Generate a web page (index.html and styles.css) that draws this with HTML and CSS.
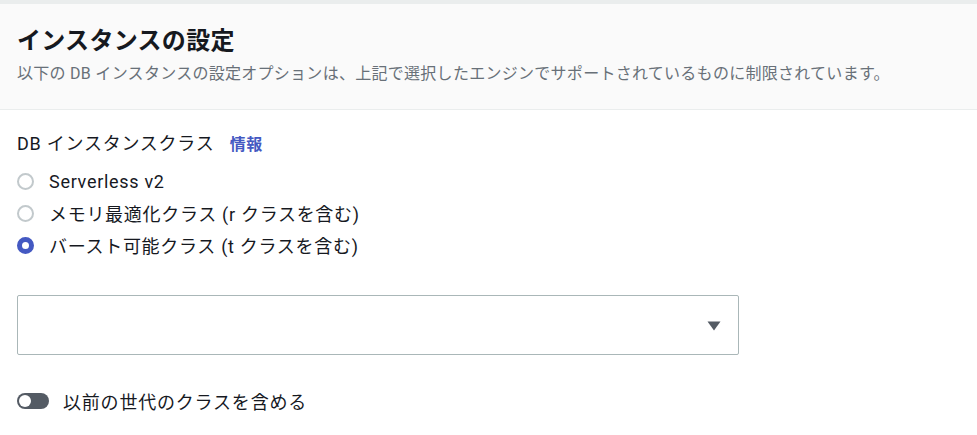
FILE: index.html
```html
<!DOCTYPE html>
<html lang="ja">
<head>
<meta charset="utf-8">
<title>インスタンスの設定</title>
<link rel="stylesheet" href="styles.css">
</head>
<body>
<div class="panel">
  <div class="panel-header">
    <h2 class="title">インスタンスの設定</h2>
    <p class="desc">以下の DB インスタンスの設定オプションは、上記で選択したエンジンでサポートされているものに制限されています。</p>
  </div>
  <div class="panel-body">
    <div class="field-label">DB インスタンスクラス <a class="info" href="#">情報</a></div>
    <div class="radios">
      <label class="radio"><span class="dot"></span><span>Serverless v2</span></label>
      <label class="radio"><span class="dot"></span><span>メモリ最適化クラス (r クラスを含む)</span></label>
      <label class="radio"><span class="dot checked"></span><span>バースト可能クラス (t クラスを含む)</span></label>
    </div>
    <div class="select">
      <svg class="caret" width="14" height="10" viewBox="0 0 14 10"><path d="M0.5 0.5 H13.5 L7 9.5 Z" fill="#545b64"/></svg>
    </div>
    <label class="toggle-row"><span class="toggle"><span class="knob"></span></span><span>以前の世代のクラスを含める</span></label>
  </div>
</div>
</body>
</html>
```
FILE: styles.css
```css
html, body {
  margin: 0;
  padding: 0;
  background: #ffffff;
}
body {
  font-family: Roboto, "Noto Sans CJK JP", sans-serif;
  color: #16191f;
}
.panel {
  border-top: 4px solid #eaeded;
}
.panel-header {
  background: #fafafa;
  border-bottom: 1px solid #eaeded;
  padding: 22px 17px 24px;
}
.title {
  margin: 0;
  font-size: 24px;
  line-height: 30px;
  font-weight: 700;
  letter-spacing: 0.3px;
  color: #16191f;
}
.desc {
  margin: 7px 0 0;
  font-size: 16px;
  line-height: 22px;
  letter-spacing: 0.28px;
  color: #687078;
}
.panel-body {
  padding: 22px 17px 0;
}
.field-label {
  font-size: 18px;
  line-height: 24px;
  letter-spacing: 0.75px;
}
.info {
  color: #4459c2;
  text-decoration: none;
  font-weight: 700;
  font-size: 16px;
  letter-spacing: 0.5px;
  margin-left: 10px;
}
.radios {
  margin-top: 8px;
  display: flex;
  flex-direction: column;
}
.radio {
  display: flex;
  align-items: center;
  height: 32px;
  font-size: 18px;
  letter-spacing: 0.7px;
  gap: 15px;
}
.dot {
  box-sizing: border-box;
  width: 17px;
  height: 17px;
  border-radius: 50%;
  border: 2px solid #c2c9cc;
  background: #fff;
}
.dot.checked {
  border: 5px solid #4459c2;
}
.select {
  box-sizing: border-box;
  margin-top: 34px;
  width: 722px;
  height: 60px;
  border: 1px solid #aab7b8;
  border-radius: 2px;
  display: flex;
  align-items: center;
  justify-content: flex-end;
  padding-right: 17px;
}
.caret {
  display: block;
  margin-top: 2px;
}
.toggle-row {
  margin-top: 34px;
  display: flex;
  align-items: center;
  gap: 14px;
  height: 24px;
  font-size: 18px;
  letter-spacing: 0.8px;
}
.toggle {
  box-sizing: border-box;
  width: 32px;
  height: 16px;
  border-radius: 8px;
  background: #545b64;
  padding: 2px;
  display: flex;
  align-items: center;
}
.knob {
  width: 12px;
  height: 12px;
  border-radius: 50%;
  background: #fff;
}
```
